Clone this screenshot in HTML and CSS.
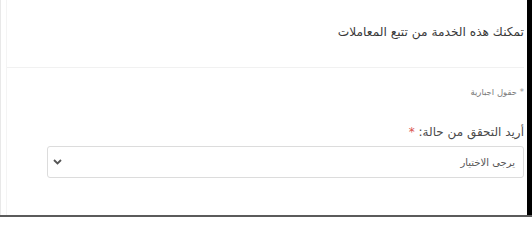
FILE: index.html
```html
<!DOCTYPE html>
<html lang="ar">
<head>
<meta charset="utf-8">
<link rel="stylesheet" href="styles.css">
</head>
<body>
<div class="frame">
  <div class="main">
    <div class="shell">
      <div class="header">
        <h1 class="title">تمكنك هذه الخدمة من تتبع المعاملات</h1>
      </div>
      <div class="body">
        <p class="note"><span class="star">*</span> حقول اجبارية</p>
        <label class="label">أريد التحقق من حالة: <span class="req">*</span></label>
        <div class="select">
          <span class="select-text">يرجى الاختيار</span>
          <svg class="chev" width="9" height="6" viewBox="0 0 9 6"><path d="M1 1 L4.5 4.5 L8 1" fill="none" stroke="#555" stroke-width="1.8"/></svg>
        </div>
      </div>
    </div>
  </div>
  <div class="gap"></div>
  <div class="bar"></div>
</div>
</body>
</html>
```
FILE: styles.css
```css
html, body {
  margin: 0;
  padding: 0;
  background: #fff;
}
body {
  width: 532px;
  height: 217px;
  overflow: hidden;
  font-family: "DejaVu Sans", sans-serif;
}
.frame {
  display: flex;
  height: 215px;
  border-bottom: 2px solid #5b5b5b;
}
.main {
  width: 523px;
  flex: none;
  border-left: 1px solid #e8e8e8;
}
.shell {
  height: 100%;
  margin-left: 5px;
  border-left: 1px solid #f4f4f4;
  direction: rtl;
}
.header {
  height: 67px;
  border-bottom: 1px solid #f1f1f1;
  display: flex;
  align-items: center;
}
.title {
  margin: 0;
  font-size: 12.2px;
  font-weight: normal;
  color: #3a3a3a;
  padding-bottom: 3px;
}
.body {
  padding: 19px 0 0 0;
}
.note {
  margin: 0 0 28px 0;
  font-size: 8.5px;
  color: #7a7a7a;
}
.star {
  color: #999;
}
.label {
  display: block;
  font-size: 12px;
  font-weight: normal;
  color: #4a4a4a;
  margin-bottom: 7px;
}
.req {
  color: #d9534f;
}
.select {
  height: 32px;
  border: 1px solid #dcdcdc;
  border-radius: 3px;
  display: flex;
  align-items: center;
  justify-content: space-between;
  padding: 0 8px 0 5px;
  box-sizing: border-box;
  width: 477px;
}
.select-text {
  font-size: 10px;
  color: #555;
}
.chev {
  display: block;
}
.gap {
  width: 3px;
  flex: none;
}
.bar {
  width: 5px;
  flex: none;
  background: #000;
}
```
